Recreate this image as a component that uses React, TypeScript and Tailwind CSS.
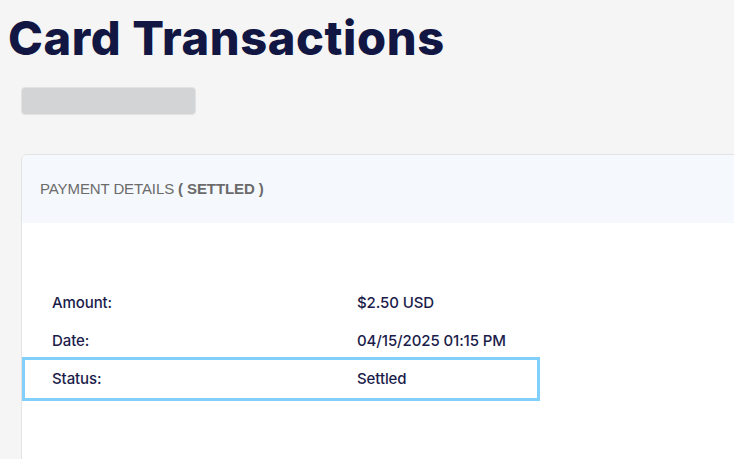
export default function App() {
  return (
    <div className="w-[734px] h-[459px] overflow-hidden bg-[#f5f5f5]" style={{ fontFamily: "Inter, 'Noto Sans', sans-serif" }}>
      <h1 className="pl-[8px] pt-[12px] text-[47px] leading-[52px] font-extrabold text-[#121642] tracking-[0.6px] whitespace-nowrap">
        Card Transactions
      </h1>
      <div className="ml-[21px] mt-[23px] w-[175px] h-[28px] rounded-[4px] bg-[#d3d4d5] border border-[#e2e2e2]" />
      <div className="ml-[21px] mt-[39px] w-[740px] h-[310px] bg-white border border-[#e3e3e3] rounded-[6px] overflow-hidden">
        <div className="h-[68px] bg-[#f5f9fd] flex items-center pl-[18px] text-[15px] text-[#6b6b6b] tracking-[-0.1px]" style={{ fontFamily: "'Liberation Sans', Arial, sans-serif" }}>
          <span>PAYMENT DETAILS</span>
          <span className="ml-[4px] font-bold">( SETTLED )</span>
        </div>
        <div className="pt-[61px] text-[15px] font-medium text-[#1b1c4a] tracking-[-0.1px]">
          <div className="flex items-center h-[38px] pl-[30px]">
            <div className="w-[305px]">Amount:</div>
            <div>$2.50 USD</div>
          </div>
          <div className="flex items-center h-[38px] pl-[30px]">
            <div className="w-[305px]">Date:</div>
            <div>04/15/2025 01:15 PM</div>
          </div>
          <div className="flex items-center h-[44px] -mt-[3px] w-[518px] pl-[27px] border-[3px] border-[#80d0fb]">
            <div className="w-[305px]">Status:</div>
            <div>Settled</div>
          </div>
        </div>
      </div>
    </div>
  );
}
